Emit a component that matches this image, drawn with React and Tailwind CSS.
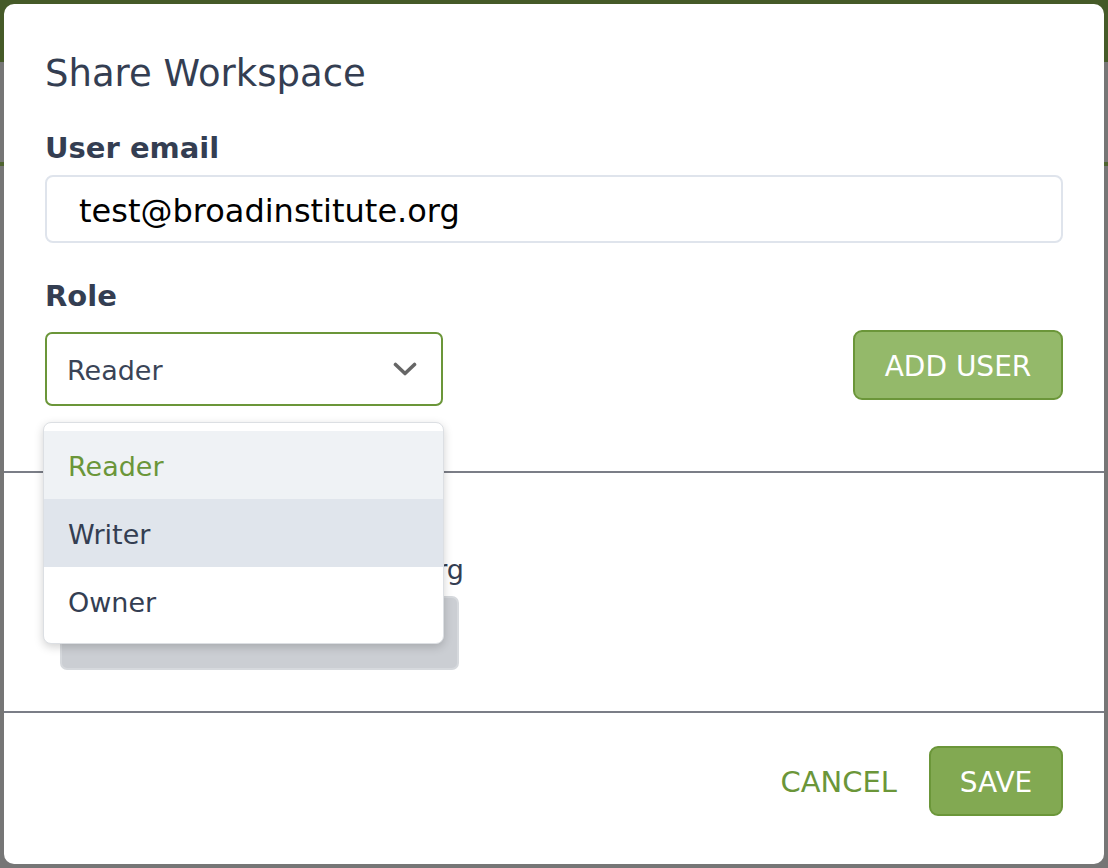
import { useState } from 'react';

const roles = ['Reader', 'Writer', 'Owner'];

const Chevron = () => (
  <svg width="24" height="15" viewBox="0 0 24 15" fill="none">
    <path d="M2.5 2.5 L12 11.5 L21.5 2.5" stroke="#666666" strokeWidth="3.6" strokeLinecap="round" strokeLinejoin="round" />
  </svg>
);

const ShareWorkspace = () => {
  const [email, setEmail] = useState('test@broadinstitute.org');
  const [role] = useState('Reader');
  const [hovered, setHovered] = useState('Writer');

  return (
    <div className="absolute left-[4px] top-[4px] flex h-[860px] w-[1100px] flex-col rounded-[10px] bg-white">
      {/* Form */}
      <div className="px-[41px] pt-[50px] pb-[65px]">
        <h2 className="text-[37px] leading-[40px] text-[#343e52]">Share Workspace</h2>

        <label className="mt-[37px] block text-[29px] font-bold leading-[34px] text-[#343e52]">
          User email
        </label>
        <input
          type="text"
          value={email}
          onChange={(e) => setEmail(e.target.value)}
          className="mt-[10px] h-[68px] w-full rounded-[8px] border-2 border-[#dfe4ec] px-[32px] pt-[4px] text-[32px] text-black outline-none"
        />

        <label className="mt-[36px] block text-[29px] font-bold leading-[34px] text-[#343e52]">
          Role
        </label>
        <div className="mt-[17px] flex items-start justify-between">
          <div className="relative mt-[2px]">
            <div className="flex h-[74px] w-[398px] items-center justify-between rounded-[7px] border-2 border-[#6b9639] pl-[20px] pr-[24px]">
              <span className="pt-[4px] text-[27px] text-[#3a4457]">{role}</span>
              <Chevron />
            </div>

            {/* Open menu */}
            <div className="absolute left-[-2px] top-[90px] z-10 w-[401px] rounded-[8px] border border-[#dcdfe3] bg-white pt-[8px] pb-[8px] shadow-[0_3px_10px_rgba(0,0,0,0.18)]">
              {roles.map((r) => (
                <div
                  key={r}
                  onMouseEnter={() => setHovered(r)}
                  className={`flex h-[68px] items-center px-[24px] pt-[4px] text-[27px] ${
                    r === role
                      ? 'bg-[#eff2f5] text-[#6b9639]'
                      : r === hovered
                        ? 'bg-[#e0e5ec] text-[#343e52]'
                        : 'text-[#343e52]'
                  }`}
                >
                  {r}
                </div>
              ))}
            </div>
          </div>

          <button className="h-[70px] w-[210px] rounded-[9px] border-2 border-[#6b9639] bg-[#94b96a] pt-[4px] text-[28px] text-white">
            ADD USER
          </button>
        </div>
      </div>

      <div className="h-[2px] bg-[#7b7e87]" />

      {/* Current users */}
      <div className="h-[238px] px-[56px] pt-[80px]">
        <div className="w-[404px] text-right text-[27px] leading-[34px] text-[#343e52]">
          john.doe@broadinstitute.org
        </div>
        <div className="mt-[9px] h-[74px] w-[399px] rounded-[7px] border-2 border-[#d6d9dd] bg-[#cbced3]" />
      </div>

      <div className="h-[2px] bg-[#7b7e87]" />

      {/* Footer */}
      <div className="flex items-start justify-end gap-[32px] px-[41px] pt-[33px]">
        <button className="h-[70px] pt-[4px] text-[29px] text-[#6b9639]">CANCEL</button>
        <button className="h-[70px] w-[134px] rounded-[9px] border-2 border-[#6b9639] bg-[#82a952] pt-[4px] text-[28px] text-white">
          SAVE
        </button>
      </div>
    </div>
  );
};

export default function App() {
  return (
    <div className="relative h-[868px] w-[1108px] overflow-hidden bg-[#767676] font-['DejaVu_Sans',sans-serif]">
      {/* dimmed page behind the dialog */}
      <div className="h-[62px] bg-[#455a28]" />
      <div className="mt-[100px] h-[4px] bg-[#4f6430]" />
      <ShareWorkspace />
    </div>
  );
}
